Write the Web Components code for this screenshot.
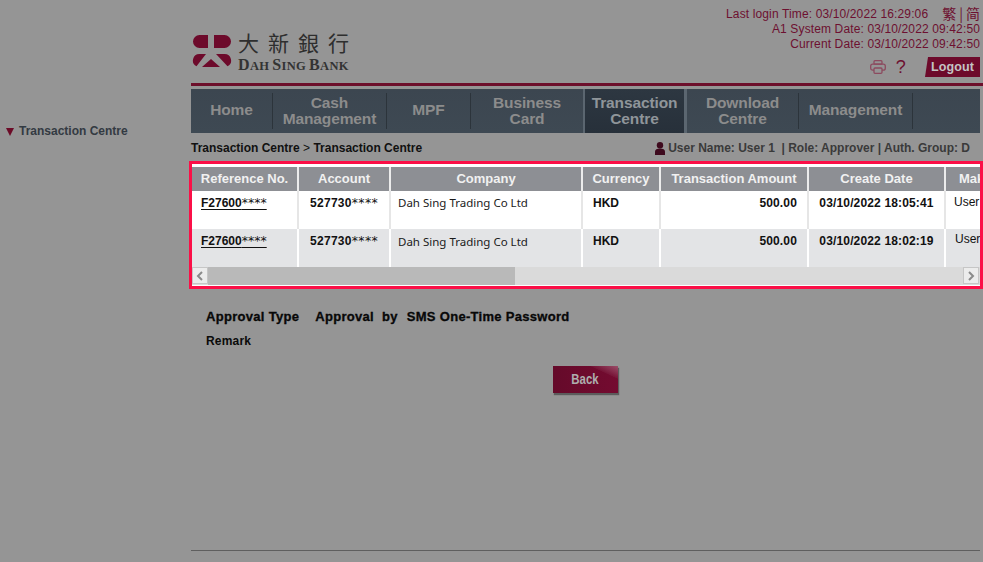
<!DOCTYPE html>
<html><head><meta charset="utf-8">
<style>
html,body{margin:0;padding:0;background:#959595;height:562px;overflow:hidden}
body{font-family:"Liberation Sans",Arial,sans-serif}
</style></head><body>
<bank-page></bank-page>
<template id="t-page"><style>
:host{display:flex;width:983px;height:562px;overflow:hidden;background:#959595}
aside{width:191px;flex:none;padding-top:124px;box-sizing:border-box}
main{width:792px;flex:none;display:flex;flex-direction:column;height:562px}
.foot{margin:auto 3px 11px 0;border-top:1px solid #5f5f5f;height:0}
</style>
<aside><side-menu>Transaction Centre</side-menu></aside>
<main><bank-header></bank-header><nav-bar></nav-bar><crumb-bar></crumb-bar><data-table></data-table><approval-info></approval-info><div class="foot"></div></main>
</template>

<template id="t-side"><style>
:host{display:flex;align-items:center;gap:5px;padding-left:6px;font:bold 12px/15px "Liberation Sans",sans-serif;color:#333a42}
i{width:0;height:0;border-left:4.5px solid transparent;border-right:4.5px solid transparent;border-top:8px solid #6c0b27;margin-top:1px}
</style><i></i><slot></slot></template>

<template id="t-header"><style>
:host{display:flex;justify-content:space-between;height:83px;border-bottom:3px solid #6d0f2b;margin-right:0}
.logo{display:flex;gap:6px;padding:35px 0 0 1px}
.words{display:flex;flex-direction:column}
.zh{font:400 21px/22px "Noto Sans CJK TC",sans-serif;letter-spacing:9px;color:#2e2e2e;margin-top:-4px;white-space:nowrap}
.en{font:bold 16px/17px "Liberation Serif",serif;color:#333;white-space:nowrap;margin-top:3px;letter-spacing:.35px;word-spacing:-1.5px}
.en small{font-size:12.500px}
.meta{display:flex;flex-direction:column;align-items:flex-end;padding-right:3px;font:12px/15px "Liberation Sans",sans-serif;color:#6d1030;padding-top:7px;letter-spacing:.13px}
.row{white-space:nowrap;display:flex;align-items:center}
.lang{font:14px/15px "Noto Sans CJK SC",sans-serif;margin-left:14px;letter-spacing:0;display:flex;gap:3px;margin-top:-3px}
.tools{display:flex;align-items:center;margin-top:5px;margin-right:0}
.q{font:400 18px/20px "Liberation Sans",sans-serif;margin:0 19px 0 10px;color:#6d1030}
.out{background:#6d0a2b;color:#c4c4c4;font:bold 12.500px/20px "Liberation Sans",sans-serif;height:20px;width:55px;text-align:center;clip-path:polygon(3px 0,100% 0,100% 100%,0 100%);letter-spacing:.1px}
</style>
<div class="logo">
<svg width="40" height="34" viewBox="0 0 40 34"><path fill="#6d0a2b" d="M7.500 0H16V13H7.500A6.500 6.500 0 0 1 7.500 0ZM22 0H32.500A6.500 6.500 0 0 1 32.500 13H22Z"/><path fill="#6d0a2b" d="M7.500 19H14L4.500 31.300A6.500 6.500 0 0 1 7.500 19ZM19 24L28 32H10ZM24 19H32.500A6.500 6.500 0 0 1 35.500 31.300Z"/></svg>
<div class="words"><div class="zh">大新銀行</div><div class="en">D<small>AH</small> S<small>ING</small> B<small>ANK</small></div></div>
</div>
<div class="meta">
<div class="row">Last login Time: 03/10/2022 16:29:06<span class="lang"><span>繁</span><span>|</span><span>简</span></span></div>
<div class="row">A1 System Date: 03/10/2022 09:42:50</div>
<div class="row">Current Date: 03/10/2022 09:42:50</div>
<div class="tools">
<svg width="16" height="14" viewBox="0 0 16 14" fill="none" stroke="#8c4a5f" stroke-width="1.300"><rect x="4" y=".7" width="8" height="3.500" rx="1"/><rect x=".7" y="4.200" width="14.600" height="6" rx="2"/><rect x="4" y="8" width="8" height="5.300" rx="1" fill="#959595"/></svg>
<span class="q">?</span><span class="out">Logout</span></div>
</div>
</template>

<template id="t-nav"><style>
:host{display:flex;height:44px;margin:3px 0 0 0;width:789px;background:linear-gradient(#3c4650,#3e4953);box-sizing:border-box;align-items:center;font:bold 15.500px/16px "Liberation Sans",sans-serif;letter-spacing:-.12px;color:#8c8c8c;text-align:center}
div{height:36px;display:flex;align-items:center;justify-content:center;border-right:1px solid #2c343b;box-sizing:border-box;flex:none;padding-bottom:2px}
.two{padding-bottom:0}
.on{height:44px;background:linear-gradient(#2d3741,#27303a);border-left:2px solid #5b6670;border-right:3px solid #5b6670;color:#8f959a}
</style>
<div style="width:82px">Home</div><div class="two" style="width:114px">Cash<br>Management</div><div style="width:84px">MPF</div><div class="two" style="width:112px;border:0">Business<br>Card</div>
<div class="on two" style="width:104px">Transaction<br>Centre</div><div class="two" style="width:112px">Download<br>Centre</div><div style="width:114px">Management</div></template>

<template id="t-crumb"><style>
:host{display:flex;justify-content:space-between;align-items:center;height:28px;padding-top:2px;box-sizing:border-box;margin-right:13px;font:bold 12px/16px "Liberation Sans",sans-serif;color:#111}
.u{color:#3a3a3a;display:flex;align-items:center;gap:3px;white-space:pre}
b{font-weight:400}
</style><span>Transaction Centre <b>&gt;</b> Transaction Centre</span>
<span class="u"><svg width="10" height="13" viewBox="0 0 10 13"><circle cx="5" cy="3.300" r="3.200" fill="#3e0a1e"/><path fill="#3e0a1e" d="M0 13V9.500C0 7.500 2 6.500 5 6.500S10 7.500 10 9.500V13Z"/></svg>User Name: User 1  | Role: Approver | Auth. Group: D</span></template>

<template id="t-table"><style>
:host{display:block;width:794px;margin-left:-2px;height:128px;box-sizing:border-box;border:3px solid #fb0f47;background:#fff;overflow:hidden;padding-top:3px;font:bold 12px/14px "Liberation Sans",sans-serif;color:#111}
.g{display:grid;grid-template-columns:107px 92px 192px 78px 148px 137px 34px;grid-template-rows:24px 38px 38px;height:100px;overflow:hidden;width:788px}
.g>*{box-sizing:border-box;white-space:nowrap;overflow:hidden;border-right:2px solid #e6e6e6}
.h{background:#8d8f94;color:#f1f1f1;text-align:center;font:bold 13px/24px "Liberation Sans",sans-serif;border-right-color:#ececec!important}
.c{padding-top:5px}
.a{background:#fff}.b{background:#e3e4e6;border-right-color:#fff!important}
.l{padding-left:9px}.r{text-align:right;padding-right:10px;letter-spacing:.15px}.m{text-align:center;letter-spacing:.15px}
.ac{letter-spacing:.3px}
.cu{padding-left:10px}
u{text-underline-offset:2px}
.s{font:400 12.500px/14px "DejaVu Sans",sans-serif}
u .s{padding-right:3px}
.co{font:400 11.500px/14px "Noto Sans",sans-serif;padding-left:7px;color:#1a1a1a;padding-top:5px}
.co.b{padding-top:6px}
.mk{font-weight:400;font-size:12px;padding-left:8px;padding-top:4px;border:0!important}
.mk.b{padding-left:9px;padding-top:3px}
.bar{display:flex;height:18px;background:#dadada;width:788px;padding-right:1px;box-sizing:border-box}
.btn{width:16px;height:17px;box-sizing:border-box;background:#ececec;border:1px solid #c6c6c6;display:flex;align-items:center;justify-content:center;flex:none}
.th{width:307px;flex:none;background:#b9b9b9}
.sp{flex:1}
</style>
<div class="g">
<div class="h">Reference No.</div><div class="h">Account</div><div class="h">Company</div><div class="h">Currency</div><div class="h">Transaction Amount</div><div class="h">Create Date</div><div class="h" style="border:0;text-align:left;padding-left:13px">Maker</div>
<div class="c a l"><u>F27600<span class="s">****</span></u></div><div class="c a m ac">527730<span class="s">****</span></div><div class="co a">Dah Sing Trading Co Ltd</div><div class="c a cu">HKD</div><div class="c a r">500.00</div><div class="c a m">03/10/2022 18:05:41</div><div class="mk a">User 1</div>
<div class="c b l"><u>F27600<span class="s">****</span></u></div><div class="c b m ac">527730<span class="s">****</span></div><div class="co b">Dah Sing Trading Co Ltd</div><div class="c b cu">HKD</div><div class="c b r">500.00</div><div class="c b m">03/10/2022 18:02:19</div><div class="mk b">User 1</div>
</div>
<div class="bar"><span class="btn"><svg width="8" height="10" viewBox="0 0 8 10" fill="none" stroke="#8a8a8a" stroke-width="2"><path d="M6 1L2 5L6 9"/></svg></span><span class="th"></span><span class="sp"></span><span class="btn"><svg width="8" height="10" viewBox="0 0 8 10" fill="none" stroke="#8a8a8a" stroke-width="2"><path d="M2 1L6 5L2 9"/></svg></span></div>
</template>

<template id="t-approval"><style>
:host{display:block;padding:20px 0 0 15px;color:#0a0a0a}
.t{display:flex;font:bold 13px/16px "Liberation Sans",sans-serif;letter-spacing:.3px;white-space:pre;-webkit-text-stroke:.3px #000}
.r{font:bold 12px/16px "Liberation Sans",sans-serif;margin-top:8px;letter-spacing:.2px}
.back{display:block;margin:17px 0 0 347px;width:65px;height:27px;box-sizing:border-box;text-align:center;font:bold 15px/26px "Liberation Sans",sans-serif;color:#aeaeae;background:linear-gradient(205deg,rgba(255,255,255,.28) 0,rgba(255,255,255,.04) 22%,transparent 23%),linear-gradient(90deg,#650a2a,#740b30);box-shadow:1px 2px 1px #5c5c5c}
.back span{display:inline-block;transform:translateX(-1px) scaleX(.76)}
</style>
<div class="t"><span>Approval Type</span><span style="margin-left:16px">Approval</span><span style="margin-left:8px">by</span><span style="margin-left:9px">SMS One-Time Password</span></div>
<div class="r">Remark</div>
<div class="back"><span>Back</span></div></template>

<script>
const reg=(n,t)=>customElements.define(n,class extends HTMLElement{constructor(){super();this.attachShadow({mode:"open"}).appendChild(document.getElementById(t).content.cloneNode(true));}});
reg("bank-page","t-page");reg("side-menu","t-side");reg("bank-header","t-header");reg("nav-bar","t-nav");reg("crumb-bar","t-crumb");reg("data-table","t-table");reg("approval-info","t-approval");
</script>
</body></html>
